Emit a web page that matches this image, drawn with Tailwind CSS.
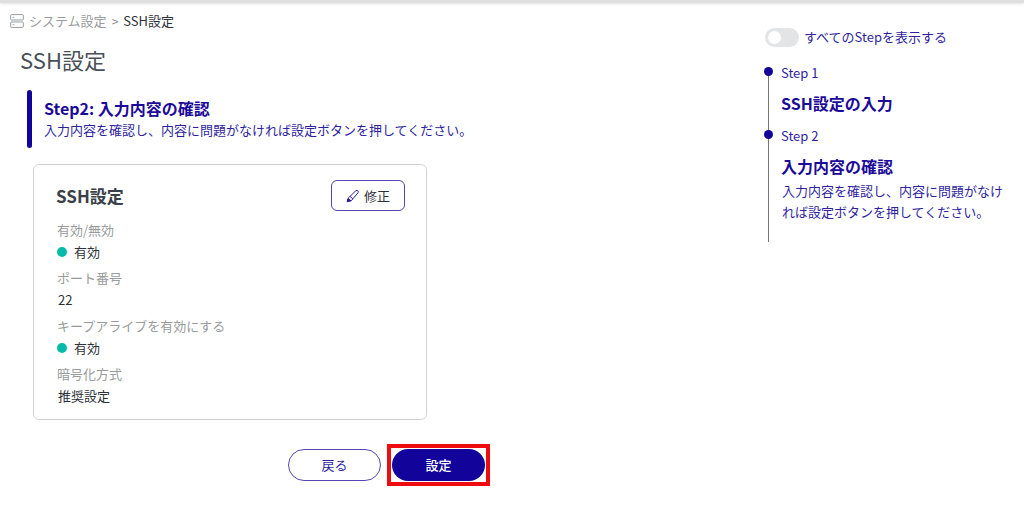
<!DOCTYPE html>
<html lang="ja">
  <head>
    <meta charset="UTF-8" />
    <meta name="viewport" content="width=device-width, initial-scale=1.0" />
    <script src="https://cdn.jsdelivr.net/npm/@tailwindcss/browser@4"></script>
    <title>SSH設定</title>
  </head>
  <body
    class="bg-white font-['Noto_Sans_CJK_JP',sans-serif] text-[13px] leading-5 text-[#2c3138]"
  >
    <div class="h-[3px] bg-[#dfdfdf] shadow-sm"></div>
    <div class="flex">
      <main class="flex-1 min-w-0 pt-2 pl-2.5">
        <nav class="flex items-center gap-[5px]">
          <svg class="w-3.5 h-3.5" viewBox="0 0 14 14" fill="none" stroke="#999b9d">
            <rect x="0.7" y="0.6" width="12.6" height="5.4" rx="0.8" />
            <rect x="0.7" y="8" width="12.6" height="5.4" rx="0.8" />
            <path d="M2.6 3.3h1.6M2.6 10.7h1.6" />
          </svg>
          <a href="#" class="text-[#999b9d]">システム設定</a>
          <span class="text-[#8a8c8e] text-xs">&gt;</span>
          <span>SSH設定</span>
        </nav>
        <h1 class="mt-3 ml-2.5 text-[22px] leading-8 text-[#4a5058]">SSH設定</h1>

        <div class="mt-[15px] ml-[17px] flex gap-3">
          <div class="w-[5px] h-[58px] rounded-full bg-[#12039b]"></div>
          <div class="pt-1.5 text-[#2f1f9f]">
            <h2 class="text-base leading-6 font-bold text-[#1c0a98]">
              Step2: 入力内容の確認
            </h2>
            <p>入力内容を確認し、内容に問題がなければ設定ボタンを押してください。</p>
          </div>
        </div>

        <section
          class="mt-4 ml-[23px] w-[394px] border border-[#d0d3d5] rounded-md pt-[15px] pb-[13px] pl-[22px] pr-[21px]"
        >
          <div class="flex items-center justify-between">
            <h3 class="text-[17px] leading-6 font-bold text-[#3a4048]">SSH設定</h3>
            <button
              type="button"
              class="flex items-center justify-center gap-1 w-[74px] h-[31px] border border-[#5546b4] rounded-md"
            >
              <svg
                class="w-3.5 h-3.5"
                viewBox="0 0 14 14"
                fill="none"
                stroke="#2a18a0"
                stroke-linejoin="round"
              >
                <path d="M4 7.4 9.9 1.7c1.2-1.1 3.2.6 2.2 2L6.8 9.9" />
                <path d="M4 7.4 6.8 9.9 5.4 11.7 1.2 12.6 2.2 9.1z" />
                <path d="M2.2 9.6 4.8 11.6 1.4 12.4z" fill="#2a18a0" />
              </svg>
              修正
            </button>
          </div>
          <dl class="mt-[7px] px-px">
            <dt class="leading-6 text-[#999b9d]">有効/無効</dt>
            <dd class="leading-5 mb-1 flex items-center gap-[7px]">
              <span class="size-2.5 rounded-full bg-[#06bba8]"></span>有効
            </dd>
            <dt class="leading-6 text-[#999b9d]">ポート番号</dt>
            <dd class="leading-5 mb-1 pl-px">22</dd>
            <dt class="leading-6 text-[#999b9d]">キープアライブを有効にする</dt>
            <dd class="leading-5 mb-1 flex items-center gap-[7px]">
              <span class="size-2.5 rounded-full bg-[#06bba8]"></span>有効
            </dd>
            <dt class="leading-6 text-[#999b9d]">暗号化方式</dt>
            <dd class="leading-5 pl-px">推奨設定</dd>
          </dl>
        </section>

        <div class="mt-6 ml-[278px] flex items-center gap-1.5">
          <button
            type="button"
            class="w-[93px] h-8 border border-[#5546b4] rounded-full text-[#2f1f9f]"
          >
            戻る
          </button>
          <div class="border-4 border-[#ee0c10] p-px">
            <button
              type="button"
              class="block w-[93px] h-8 rounded-full bg-[#12039b] text-white font-medium"
            >
              設定
            </button>
          </div>
        </div>
      </main>

      <aside class="w-[259px] shrink-0 pt-6 pr-4 text-[#2f1f9f]">
        <label class="flex items-center gap-[5px]">
          <input
            type="checkbox"
            class="appearance-none w-[34px] h-[19px] rounded-full bg-[#e2e4e6] before:block before:size-[13px] before:m-[3px] before:rounded-full before:bg-white checked:bg-[#12039b] checked:before:ml-[18px]"
          />
          すべてのStepを表示する
        </label>
        <ol class="mt-6 ml-[3px] border-l border-[#77777b]">
          <li class="relative pl-3 h-[63px]">
            <span class="absolute -left-[5px] -top-1 size-[9px] rounded-full bg-[#12039b]"></span>
            <p class="relative -top-2">Step 1</p>
            <h4 class="text-base leading-6 font-bold text-[#1c0a98]">SSH設定の入力</h4>
          </li>
          <li class="relative pl-3 pb-5">
            <span class="absolute -left-[5px] -top-1 size-[9px] rounded-full bg-[#12039b]"></span>
            <p class="relative -top-2">Step 2</p>
            <h4 class="text-base leading-6 font-bold text-[#1c0a98]">入力内容の確認</h4>
            <p class="pt-0.5 pl-px leading-[21px]">
              入力内容を確認し、内容に問題がなければ設定ボタンを押してください。
            </p>
          </li>
        </ol>
      </aside>
    </div>
  </body>
</html>
